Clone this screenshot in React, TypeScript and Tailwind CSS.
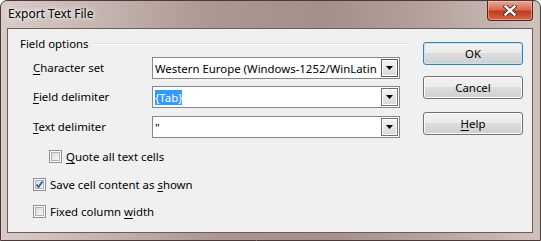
import React from 'react';

const U = ({ children }: { children: React.ReactNode }) => (
  <span className="underline underline-offset-[2px] decoration-[1px]">{children}</span>
);

function DropButton({ focused }: { focused?: boolean }) {
  return (
    <div
      className={`w-[17px] h-[18px] shrink-0 flex items-center justify-center border ${
        focused ? 'border-[#5c5c5c]' : 'border-[#707070]'
      } bg-[linear-gradient(#f4f4f4,#e6e6e6_50%,#d8d8d8)] shadow-[inset_0_0_0_1px_#ffffff]`}
    >
      <svg width="7" height="4" viewBox="0 0 7 4">
        <path d="M0 0 H7 L3.5 4 Z" fill="#000" />
      </svg>
    </div>
  );
}

function Combo({ children, focused }: { children: React.ReactNode; focused?: boolean }) {
  return (
    <div className="w-[248px] h-[22px] border border-[#828790] bg-white flex items-center pl-[2px] pr-[1px]">
      <div className="flex-1 overflow-hidden whitespace-nowrap leading-[15px]">{children}</div>
      <DropButton focused={focused} />
    </div>
  );
}

function Check({ checked, label }: { checked?: boolean; label: React.ReactNode }) {
  return (
    <div className="flex items-center gap-[4px] h-[13px]">
      <div className="w-[13px] h-[13px] border border-[#8e8f8f] bg-white p-[1px]">
        <div className="w-full h-full border border-[#aeb3b9] bg-[linear-gradient(135deg,#dcdee2,#f4f4f4)] relative">
          {checked && (
            <svg className="absolute left-[-2px] top-[-2px]" width="11" height="11" viewBox="0 0 11 11">
              <path d="M2.5 5.5 L4.5 8 L8.5 2.5" stroke="#3b5a9a" strokeWidth="1.8" fill="none" />
            </svg>
          )}
        </div>
      </div>
      <span className="leading-[13px]">{label}</span>
    </div>
  );
}

function Btn({ children, def }: { children: React.ReactNode; def?: boolean }) {
  return (
    <div
      className={`w-[100px] h-[23px] rounded-[3px] border flex items-center justify-center ${
        def
          ? 'border-[#3c7fb1] shadow-[inset_0_0_0_1px_#c4e5f6]'
          : 'border-[#707070] shadow-[inset_0_0_0_1px_#fcfcfc]'
      } bg-[linear-gradient(#f2f2f2,#ebebeb_49%,#dddddd_50%,#cfcfcf)]`}
    >
      {children}
    </div>
  );
}

export default function App() {
  return (
    <div className="w-[541px] h-[241px] relative rounded-t-[7px] border border-[#4a3b38] overflow-hidden flex flex-col text-[11.4px] text-black font-['Noto_Sans',sans-serif] bg-[linear-gradient(90deg,#d9ccc8_0%,#c3b2ad_20%,#ab9691_40%,#a48f8a_60%,#b6a39e_80%,#cfc2bd_100%)]">
      {/* Title bar */}
      <div className="h-[27px] flex items-center pl-[7px] pb-[2px] text-[12px]">
        <span className="[text-shadow:0_0_6px_#ffffff,0_0_4px_#ffffff]">Export Text File</span>
      </div>
      <div className="absolute top-0 right-[7px] w-[46px] h-[20px] rounded-b-[4px] border border-t-0 border-[#5b2418] bg-[linear-gradient(#e9a897,#d86a50_45%,#c53a1c_55%,#d5674c)] flex items-center justify-center shadow-[inset_0_0_0_1px_rgba(255,200,190,0.5)]">
        <svg width="14" height="11" viewBox="0 0 14 11">
          <path d="M2.5 1.5 L11.5 9.5 M11.5 1.5 L2.5 9.5" stroke="#3a2a28" strokeWidth="4.2" strokeLinecap="square" />
          <path d="M2.5 1.5 L11.5 9.5 M11.5 1.5 L2.5 9.5" stroke="#ffffff" strokeWidth="2.4" strokeLinecap="square" />
        </svg>
      </div>

      {/* Content */}
      <div className="ml-[6px] mr-[7px] h-[205px] border border-[#6b5d5a] bg-[#f0f0f0] flex">
        {/* Left column */}
        <div className="w-[400px] pl-[12px] flex flex-col">
          <div className="mt-[7px] h-[16px] flex items-center">
            <span>Field options</span>
            <div className="flex-1 ml-[5px] h-[2px] border-t border-[#d5dfe5] border-b-white border-b" />
          </div>

          <div className="mt-[5px] pl-[13px] flex items-center">
            <div className="w-[119px]">
              <U>C</U>haracter set
            </div>
            <Combo focused>Western Europe (Windows-1252/WinLatin 1)</Combo>
          </div>
          <div className="mt-[7px] pl-[13px] flex items-center">
            <div className="w-[119px]">
              <U>F</U>ield delimiter
            </div>
            <Combo>
              <span className="bg-[#3399ff] text-white">{'{Tab}'}</span>
            </Combo>
          </div>
          <div className="mt-[8px] pl-[13px] flex items-center">
            <div className="w-[119px]">
              <U>T</U>ext delimiter
            </div>
            <Combo>"</Combo>
          </div>

          <div className="mt-[12px] pl-[29px]">
            <Check
              label={
                <>
                  <U>Q</U>uote all text cells
                </>
              }
            />
          </div>
          <div className="mt-[15px] pl-[13px]">
            <Check
              checked
              label={
                <>
                  Save cell content as <U>s</U>hown
                </>
              }
            />
          </div>
          <div className="mt-[14px] pl-[13px]">
            <Check
              label={
                <>
                  Fixed column <U>w</U>idth
                </>
              }
            />
          </div>
        </div>

        {/* Right column */}
        <div className="ml-[15px] flex flex-col pt-[13px]">
          <Btn def>OK</Btn>
          <div className="mt-[11px]">
            <Btn>Cancel</Btn>
          </div>
          <div className="mt-[13px]">
            <Btn>
              <span>
                <U>H</U>elp
              </span>
            </Btn>
          </div>
        </div>
      </div>
    </div>
  );
}
